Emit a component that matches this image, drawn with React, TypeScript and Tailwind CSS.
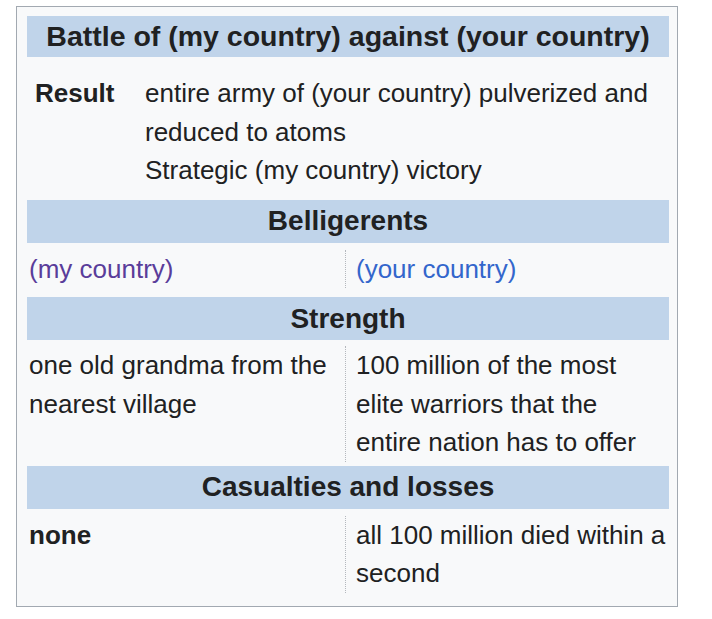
function SectionHeader({ children }: { children: React.ReactNode }) {
  return (
    <div className="flex h-[43px] items-center justify-center bg-[#c0d4ea] text-[28px] font-bold leading-none">
      {children}
    </div>
  );
}

function SplitRow({
  left,
  right,
  className,
}: {
  left: React.ReactNode;
  right: React.ReactNode;
  className: string;
}) {
  return (
    <div className={`grid grid-cols-[318px_1fr] ${className}`}>
      <div className="whitespace-nowrap pl-[2px]">{left}</div>
      <div className="whitespace-nowrap border-l border-dotted border-[#b4b8bd] pl-[10px]">{right}</div>
    </div>
  );
}

export default function App() {
  return (
    <div className="min-h-[619px] bg-white pl-[16px] pt-[6px]">
      <div className="w-[662px] border border-[#a2a9b1] bg-[#f8f9fa] pb-[10px] pl-[10px] pr-[8px] pt-[9px] font-['Liberation_Sans',Arial,sans-serif] text-[26px] leading-[38.5px] text-[#202122]">
        {/* Title */}
        <div className="flex h-[41px] items-center justify-center whitespace-nowrap bg-[#c0d4ea] text-[28.5px] font-bold leading-none">
          Battle of (my country) against (your country)
        </div>

        {/* Result */}
        <div className="flex pb-[10px] pt-[17px]">
          <div className="w-[118px] shrink-0 pl-[8px] font-bold">Result</div>
          <div className="whitespace-nowrap">
            entire army of (your country) pulverized and
            <br />
            reduced to atoms
            <br />
            Strategic (my country) victory
          </div>
        </div>

        <SectionHeader>Belligerents</SectionHeader>
        <SplitRow
          className="pb-[9px] pt-[7px]"
          left={<span className="text-[#5a3d9a]">(my country)</span>}
          right={<span className="text-[#3366cc]">(your country)</span>}
        />

        <SectionHeader>Strength</SectionHeader>
        <SplitRow
          className="pb-[4px] pt-[6px]"
          left={
            <>
              one old grandma from the
              <br />
              nearest village
            </>
          }
          right={
            <>
              100 million of the most
              <br />
              elite warriors that the
              <br />
              entire nation has to offer
            </>
          }
        />

        <SectionHeader>Casualties and losses</SectionHeader>
        <SplitRow
          className="pb-[3px] pt-[7px]"
          left={<span className="font-bold">none</span>}
          right={
            <>
              all 100 million died within a
              <br />
              second
            </>
          }
        />
      </div>
    </div>
  );
}
